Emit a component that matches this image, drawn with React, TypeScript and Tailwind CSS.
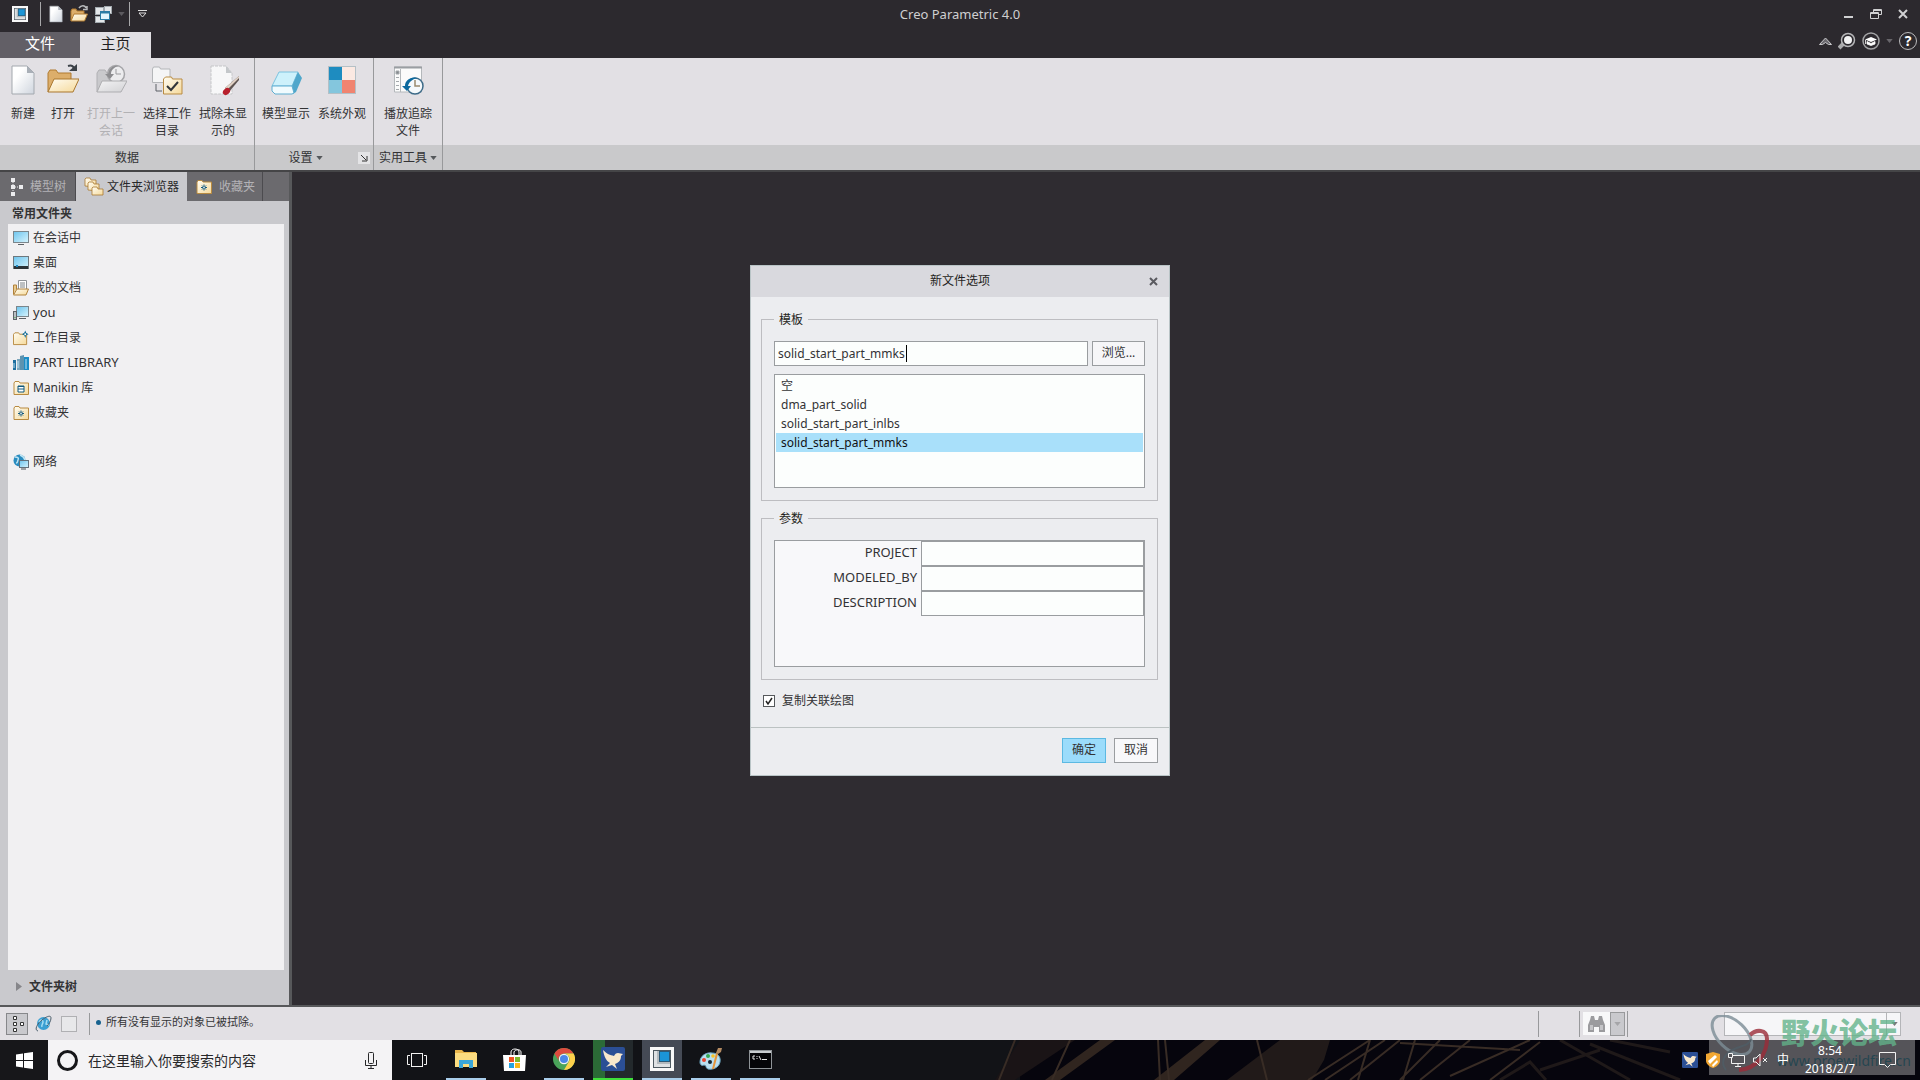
import React, { useState } from 'react';
import type { ReactNode } from 'react';

/* ---------- Shared icon pieces ---------- */

function Gradients() {
  return (
    <svg width="0" height="0" className="absolute" aria-hidden="true">
      <defs>
        <linearGradient id="paper" x1="0" y1="0" x2="1" y2="1">
          <stop offset="0.3" stopColor="#ffffff" />
          <stop offset="1" stopColor="#cfd5de" />
        </linearGradient>
        <linearGradient id="folder" x1="0" y1="0" x2="1" y2="1">
          <stop offset="0" stopColor="#fffdf4" />
          <stop offset="1" stopColor="#f5d99a" />
        </linearGradient>
        <linearGradient id="screen" x1="0" y1="0" x2="1" y2="1">
          <stop offset="0" stopColor="#6cc4ee" />
          <stop offset="1" stopColor="#d8f4fd" />
        </linearGradient>
        <linearGradient id="ghost" x1="0" y1="0" x2="1" y2="1">
          <stop offset="0" stopColor="#f3f3f4" />
          <stop offset="1" stopColor="#d2d2d5" />
        </linearGradient>
      </defs>
    </svg>
  );
}

function CreoIcon({ size = 16 }: { size?: number }) {
  return (
    <svg width={size} height={size} viewBox="0 0 24 24">
      <rect width="24" height="24" fill="#f8f8f8" />
      <rect x="3" y="3" width="18" height="18" fill="#4d5961" />
      <rect x="4" y="4" width="16" height="16" fill="#dfe2e4" />
      <path d="M7 4h2v11h11v2H7z" fill="#b4babe" />
      <rect x="9" y="4" width="11" height="11" fill="#2a5a78" />
      <rect x="10" y="5" width="9" height="9" fill="#1b95d6" />
    </svg>
  );
}

function PageIcon({ size = 16 }: { size?: number }) {
  return (
    <svg width={size} height={size} viewBox="0 0 32 32">
      <path d="M5 2h15l7 7v21H5z" fill="url(#paper)" stroke="#a3a8ae" />
      <path d="M20 2v7h7z" fill="#a9afb7" />
    </svg>
  );
}

function OpenIcon({ size = 16 }: { size?: number }) {
  return (
    <svg width={size} height={size} viewBox="0 0 32 32">
      <path d="M1 28V9l2-3h6l2 3h13v8" fill="#dcae6b" stroke="#b07b30" />
      <path d="M7 15h25l-6 13H1z" fill="url(#folder)" stroke="#a9772e" />
      <path d="M21 2c3-1 5 0 6 2" fill="none" stroke="#3c4248" strokeWidth="2" />
      <path d="M22 7h8V0z" fill="#3c4248" />
    </svg>
  );
}

/* The small quick access variant has a lighter arrow for the dark bar */
function QuickOpenIcon() {
  return (
    <svg width="18" height="18" viewBox="0 0 18 18">
      <path d="M1 16V6l1-2h4l1 2h7v4" fill="#dcae6b" stroke="#b07b30" />
      <path d="M4 9h13.500l-3 7H1z" fill="url(#folder)" stroke="#b07b30" />
      <path d="M9 3c2-3 6-3 7 0M13 4.500h4V1" fill="none" stroke="#b9bbbd" strokeWidth="1.500" />
    </svg>
  );
}

function WindowsIcon() {
  return (
    <svg width="18" height="17" viewBox="0 0 18 17">
      <rect x="1.500" y="1.500" width="8" height="7" fill="#e4e7e9" stroke="#a2a9ae" />
      <rect x="10.500" y="0.500" width="7" height="7" fill="#e4e7e9" stroke="#a2a9ae" />
      <rect x="1.500" y="10.500" width="9" height="6" fill="#e4e7e9" stroke="#a2a9ae" />
      <rect x="6.500" y="5.500" width="9" height="8" fill="#e3f6fc" stroke="#2a7da4" />
      <path d="M6 6.500h10" stroke="#2a7da4" strokeWidth="2" />
    </svg>
  );
}

function SessionIcon() {
  return (
    <svg width="32" height="32" viewBox="0 0 32 32">
      <path d="M2 28V9l2-3h6l2 3h12v8" fill="#c9c9cc" stroke="#b0b0b3" />
      <circle cx="21" cy="10" r="8.500" fill="#ececee" stroke="#a5a5a8" strokeWidth="1.500" />
      <path d="M21 5v5h5" fill="none" stroke="#9b9b9e" />
      <path d="M24 2c-6-1-10 2-11 8h-3l5 5 4-5h-3c0-4 3-7 8-8z" fill="#8d8d90" />
      <path d="M7 17h25l-6 11H2z" fill="url(#ghost)" stroke="#adadb0" />
    </svg>
  );
}

function WorkDirIcon() {
  return (
    <svg width="32" height="32" viewBox="0 0 32 32">
      <path d="M1.500 18.500V5l1-2h6l1 2h9.500v13.500z" fill="#f5f5f6" stroke="#b4b6b9" />
      <path d="M5 20v7h6" fill="none" stroke="#5d6166" />
      <path d="M12.500 30V15l2-2h6l1 2h9.500v15z" fill="url(#folder)" stroke="#b98b42" />
      <path d="M16 22l4 4 7-8" fill="none" stroke="#32363a" strokeWidth="2" />
    </svg>
  );
}

function EraseIcon() {
  return (
    <svg width="32" height="32" viewBox="0 0 32 32">
      <path d="M4 2h15l6 7v21H4z" fill="#f7f7f8" stroke="#c5c6c8" strokeDasharray="3 1" />
      <path d="M19 2v7h6z" fill="#c4c7ca" />
      <path d="M32 12v4L22 28l-4-4z" fill="#5f5552" />
      <path d="M32 12L18 24l2 2 12-12z" fill="#e2d3c6" />
      <ellipse cx="19.500" cy="27.500" rx="4" ry="3" fill="#b8202c" transform="rotate(-40 19.500 27.500)" />
    </svg>
  );
}

function ModelIcon() {
  return (
    <svg width="32" height="32" viewBox="0 0 32 32">
      <path d="M9 8h19l-6 14H2z" fill="#cdf1fb" stroke="#7cc3df" />
      <path d="M28 8l4 6-6 14-3 2-1-8z" fill="#4fa7cb" />
      <path d="M2 22h20l2 7-2 1H5l-3-3z" fill="#f0fbfe" stroke="#5eadd0" />
    </svg>
  );
}

function AppearanceIcon() {
  return (
    <svg width="32" height="32" viewBox="0 0 32 32">
      <rect x="2" y="2" width="28" height="28" fill="#b4c0c6" />
      <rect x="3" y="3" width="13" height="13" fill="#1e8cc0" />
      <rect x="16" y="3" width="13" height="13" fill="#fbe9e2" />
      <rect x="3" y="16" width="13" height="13" fill="#84c6dd" />
      <rect x="16" y="16" width="13" height="13" fill="#f08470" />
    </svg>
  );
}

function TraceIcon() {
  return (
    <svg width="32" height="32" viewBox="0 0 32 32">
      <path d="M2.500 3h27v25h-27z" fill="#fbfbfb" stroke="#b4b8bb" />
      <path d="M2 3.500h28" stroke="#9a9ea2" strokeWidth="2" />
      <path d="M8.500 5v23" stroke="#b4b8bb" />
      <path d="M4 7h3v3H4zM4 13.500h3M4 17.500h3M4 21.500h3M4 25.500h3" fill="#84888c" stroke="#a4a8ac" />
      <circle cx="23" cy="22" r="8" fill="#f5f9fb" stroke="#3d6b88" strokeWidth="1.500" />
      <path d="M23 16v6h5" fill="none" stroke="#9a8b6e" strokeWidth="1.500" />
      <path d="M26 14c-7-2-13 2-13 8h-3l5 5 4-5h-3c1-4 4-7 10-8z" fill="#0d6a9f" />
    </svg>
  );
}

/* ---------- Small icons ---------- */

function Caret({ className = 'text-[#55585b]' }: { className?: string }) {
  return (
    <svg width="7" height="4" viewBox="0 0 8 5" className={className}>
      <path d="M0 0h8L4 5z" fill="currentColor" />
    </svg>
  );
}

function TreeIcon() {
  return (
    <svg width="14" height="20" viewBox="0 0 14 20" fill="#ececee">
      <path d="M1 1h4v4H1zM1 8h4v4H1zM1 15h4v4H1zM9 8h4v4H9z" />
      <path d="M3 5v10M5 10h4" stroke="#ececee" strokeDasharray="1 1" />
    </svg>
  );
}

function FoldersIcon() {
  return (
    <svg width="20" height="20" viewBox="0 0 20 20" stroke="#a97a30" strokeWidth="0.800">
      <path d="M1 9V2l1-1h4l1 2h5v7z" fill="url(#folder)" />
      <path d="M4 13V6l1-1h4l1 2h5v7z" fill="url(#folder)" />
      <path d="M8 18v-7l1-1h4l1 2h5v6z" fill="url(#folder)" />
    </svg>
  );
}

function FavoriteIcon() {
  return (
    <svg width="16" height="16" viewBox="0 0 16 16">
      <path d="M1 14.500V3l1-1.500h4L7 3h8.500v11.500z" fill="url(#folder)" stroke="#b88a40" />
      <path d="M8 5.500v6M5 8.500h6M6 6.500l4 4M10 6.500l-4 4" stroke="#11597f" />
      <circle cx="8" cy="8.500" r="0.800" fill="#fff" />
    </svg>
  );
}

function MonitorIcon() {
  return (
    <svg width="16" height="16" viewBox="0 0 16 16">
      <rect x="0.500" y="1.500" width="15" height="11" fill="url(#screen)" stroke="#7b868c" />
      <path d="M5 14h6v1H5z" fill="#5b6266" />
    </svg>
  );
}

function DesktopIcon() {
  return (
    <svg width="16" height="16" viewBox="0 0 16 16">
      <rect x="0.500" y="1.500" width="15" height="12" fill="url(#screen)" stroke="#6e787e" />
      <path d="M1 11h14v3H1z" fill="#2b3338" />
      <path d="M3 10h2v2H3z" fill="#1c86c0" />
    </svg>
  );
}

function DocumentsIcon() {
  return (
    <svg width="16" height="16" viewBox="0 0 16 16">
      <path d="M0.500 14V5h3v4" fill="#e8c98e" stroke="#b1823a" />
      <path d="M5.500 0.500h8v10h-8z" fill="#fff" stroke="#8e9296" />
      <path d="M7 3h5M7 5h5M7 7h5" stroke="#7d8286" />
      <path d="M4 9h11.500L13 15H0.500z" fill="url(#folder)" stroke="#b1823a" />
    </svg>
  );
}

function ComputerIcon() {
  return (
    <svg width="16" height="16" viewBox="0 0 16 16">
      <rect x="3.500" y="1.500" width="12" height="10" fill="url(#screen)" stroke="#7b868c" />
      <path d="M6 13h7v1H6z" fill="#5b6266" />
      <rect x="0.500" y="6.500" width="3" height="8" fill="#b9bfc3" stroke="#5e6468" />
      <path d="M2 12v1" stroke="#37a23c" />
    </svg>
  );
}

function WorkFolderIcon() {
  return (
    <svg width="17" height="16" viewBox="0 0 17 16">
      <path d="M0.500 15V4L2 2.500h4L7 4h7.500v11z" fill="url(#folder)" stroke="#b88a40" />
      <path d="M13 0l1 2.500L16.500 4 14 5l-1 3-1-3-2.500-1L12 2.500z" fill="#0f6b98" />
      <circle cx="13" cy="4" r="1" fill="#fff" />
    </svg>
  );
}

function LibraryIcon() {
  return (
    <svg width="16" height="16" viewBox="0 0 16 16">
      <path d="M0 5h3v10H0z" fill="#1e6f9f" />
      <path d="M4 4h3v11H4z" fill="#7ba5bb" />
      <path d="M7 1l4-1v15H7z" fill="#5d93b0" />
      <path d="M11 2h5v13h-5z" fill="#1b8cc6" />
      <path d="M1 8v5M5 6v7M13 4v10" stroke="#bfe3f3" />
    </svg>
  );
}

function ManikinIcon() {
  return (
    <svg width="16" height="16" viewBox="0 0 16 16">
      <path d="M1 14.500V3l1-1.500h4L7 3h8.500v11.500z" fill="url(#folder)" stroke="#b88a40" />
      <path d="M5 6h6v6H5z" fill="#fff" stroke="#11597f" />
      <path d="M5 9h6M5 6.500h6" stroke="#11597f" />
    </svg>
  );
}

function NetworkIcon() {
  return (
    <svg width="16" height="16" viewBox="0 0 16 16">
      <circle cx="6.500" cy="6.500" r="6" fill="#2a8cc0" />
      <path d="M2 3c3 0 4 1 3 3s0 3-2 3M7 1c3 1 4 2 5 5" stroke="#bfe4f3" strokeWidth="1.500" fill="none" />
      <rect x="6.500" y="6.500" width="9" height="7" fill="url(#screen)" stroke="#63707a" />
      <path d="M8 15h5" stroke="#4b5256" />
    </svg>
  );
}

/* ---------- Taskbar icons ---------- */

function BirdIcon({ size }: { size: number }) {
  return (
    <svg width={size} height={size} viewBox="0 0 24 24">
      <rect width="24" height="24" rx="2" fill="#2b4f95" />
      <path d="M2 3c4 4 7 5 11 6 1-2 2-3 4-3l5 1-2 2c0 5-3 7-6 8l2 5-5-4-6 2 4-4c-4-2-6-7-7-13z" fill="#f8e8cc" />
    </svg>
  );
}

function ExplorerIcon() {
  return (
    <svg width="22" height="20" viewBox="0 0 22 20">
      <path d="M0 1h7l2 2h12v4H0z" fill="#e9b64c" />
      <path d="M0 4h22v14H0z" fill="#fbdc80" />
      <path d="M4 19v-8h14v8h-4v-4H8v4z" fill="#3aa6d8" />
    </svg>
  );
}

function StoreIcon() {
  return (
    <svg width="24" height="24" viewBox="0 0 24 24">
      <path d="M8 8V4c0-4 8-4 8 0v4M11 7V4c1-3 7-3 7 0v3" fill="none" stroke="#fff" />
      <path d="M0 7h23l-1 16H1z" fill="#fff" />
      <path d="M6 9h5v5H6z" fill="#f05323" />
      <path d="M12 9h5v5h-5z" fill="#7fba2c" />
      <path d="M6 15h5v5H6z" fill="#26a3e0" />
      <path d="M12 15h5v5h-5z" fill="#fbb918" />
    </svg>
  );
}

function ChromeIcon() {
  return (
    <svg width="22" height="22" viewBox="0 0 24 24">
      <circle cx="12" cy="12" r="12" fill="#4aa35a" />
      <path d="M1.600 6A12 12 0 0 1 22.400 6H12a6 6 0 0 0-5.200 9z" fill="#dd4b3e" />
      <path d="M22.400 6A12 12 0 0 1 12 24l5.200-9A6 6 0 0 0 12 6z" fill="#fdd04b" />
      <circle cx="12" cy="12" r="5.600" fill="#f4f4f4" />
      <circle cx="12" cy="12" r="4.400" fill="#4a86e8" />
    </svg>
  );
}

function PaintIcon() {
  return (
    <svg width="24" height="24" viewBox="0 0 24 24">
      <path d="M1 15c0-6 6-10 12-9 6 0 9 4 8 9-1 6-8 8-12 7-3-1-1-4-4-4-2 1-4 0-4-3z" fill="#b9dff0" stroke="#6ba6c2" />
      <circle cx="9" cy="9" r="2" fill="#35a853" />
      <circle cx="5" cy="13" r="2" fill="#e8452f" />
      <circle cx="14" cy="9" r="1.800" fill="#f7c325" />
      <circle cx="11" cy="15" r="2" fill="#132530" />
      <path d="M13 22l4-16 2 1-4 15z" fill="#e5963c" />
      <path d="M17 6l2-5 4 0-1 4-3 2z" fill="#b58b62" />
    </svg>
  );
}

function ConsoleIcon() {
  return (
    <svg width="23" height="19" viewBox="0 0 23 19">
      <rect x="0.500" y="0.500" width="22" height="18" fill="#050508" stroke="#8f9498" />
      <path d="M1 1h21v2H1z" fill="#c9cdd0" />
      <path d="M6 6H4v3h2M8 6v1M8 8v1M10 6l2 4M13 9.500h5" stroke="#e6e6e6" fill="none" />
    </svg>
  );
}

function TaskViewIcon() {
  return (
    <svg width="20" height="14" viewBox="0 0 20 14" fill="none" stroke="#f2f2f2">
      <rect x="4.500" y="0.500" width="11" height="13" />
      <path d="M3 2.500H0.500v9H3M17 2.500h2.500v9H17" />
    </svg>
  );
}

/* Steel beams of the wallpaper behind the taskbar */
function TaskbarBackdrop() {
  return (
    <svg className="absolute inset-0 h-full w-full" viewBox="0 0 1920 40" preserveAspectRatio="none" aria-hidden="true">
      <rect width="1920" height="40" fill="#06050d" />
      <rect x="390" width="630" height="40" fill="#121317" />
      <path d="M1020 0h55l-60 40h-20z" fill="#1a1416" />
      <path d="M1100 0h15l-55 40h-15zM1205 0h15l-46 40h-20z" fill="#30251f" />
      <path d="M1280 0h50l-6 20-12 20h-85z" fill="#211a19" />
      <path
        d="M1015 0l-16 40M1070 0l-18 40M1158 0l2 40M1165 0l4 40M1257 0l10 40M1308 40l62-40M1325 40l60-40M1370 0l-12 40M1400 0l-50 40M1415 0l-12 40M1440 0l-40 40M1470 0l-50 40M1400 3l120 7M1450 36l80-36M1490 40l50-38"
        stroke="#382c25"
        strokeWidth="2"
      />
      <path
        d="M1560 0l70 40M1590 4l90 36M1610 0l60 12M1540 30l60-20M1500 40l30-18 16 18"
        stroke="#1f1919"
        strokeWidth="3"
        fill="none"
      />
    </svg>
  );
}

/* ---------- Window parts ---------- */

function TitleBar() {
  return (
    <div className="relative flex h-8 items-center justify-between bg-[#2c292e] pr-3">
      <div className="flex h-full items-center pb-1">
        <button className="ml-3" aria-label="Creo">
          <CreoIcon />
        </button>
        <span className="ml-3 h-6 w-px bg-[#a8a8aa]" />
        <button className="ml-[6px]" aria-label="新建">
          <PageIcon size={18} />
        </button>
        <button className="ml-[5px]" aria-label="打开">
          <QuickOpenIcon />
        </button>
        <button className="ml-[6px] flex items-center gap-[6px]" aria-label="窗口">
          <WindowsIcon />
          <Caret className="text-[#5c5a5f]" />
        </button>
        <span className="ml-1 h-6 w-px bg-[#a8a8aa]" />
        <button className="ml-2" aria-label="自定义快速访问工具栏">
          <svg width="9" height="8" viewBox="0 0 9 8" fill="none" stroke="#dcdcdc">
            <path d="M0 0.500h9M1 3h7L4.500 7z" />
          </svg>
        </button>
      </div>
      <h1 className="pointer-events-none absolute inset-x-0 top-1 text-center text-[13px] leading-5 text-[#cfcfd1]">
        Creo Parametric 4.0
      </h1>
      <div className="flex items-center gap-4 pb-[5px] text-[#d0d0d2]">
        <button aria-label="最小化">
          <svg width="10" height="10" viewBox="0 0 10 10">
            <path d="M0 7h9v2H0z" fill="currentColor" />
          </svg>
        </button>
        <button aria-label="还原">
          <svg width="12" height="10" viewBox="0 0 12 10" fill="none" stroke="currentColor">
            <path d="M3.500 3V0.500h8v5H8.500M0.500 3.500h8v6h-8zM3 1.500h8M0 4.500h8" />
          </svg>
        </button>
        <button aria-label="关闭">
          <svg width="10" height="10" viewBox="0 0 10 10">
            <path d="M1 1l8 8M9 1l-8 8" stroke="currentColor" strokeWidth="2" />
          </svg>
        </button>
      </div>
    </div>
  );
}

function RibbonTabs() {
  return (
    <div className="flex h-[26px] items-stretch justify-between bg-[#2c292e] pr-[3px]">
      <div className="flex text-[15px] leading-[22px]">
        <button className="w-20 bg-[#625f66] pb-1 text-white">文件</button>
        <button className="w-[71px] bg-[#e2e0e4] pb-1 text-[#1f1f21]">主页</button>
      </div>
      <div className="flex items-center gap-[6px] pb-2">
        <button aria-label="最小化功能区">
          <svg width="13" height="9" viewBox="0 0 13 9">
            <path d="M0.500 7.500L6.500 1l6 6.500h-3l-3-2-3 2z" fill="#6c6a70" stroke="#c8c8ca" />
          </svg>
        </button>
        <button aria-label="搜索">
          <svg width="18" height="18" viewBox="0 0 18 18">
            <path d="M6 11l-5 5" stroke="#a9a9ab" strokeWidth="4" />
            <circle cx="10" cy="8" r="6.500" fill="#2c292e" stroke="#b5b5b7" strokeWidth="1.500" />
            <circle cx="10" cy="8" r="4" fill="#f2f2f3" />
          </svg>
        </button>
        <button aria-label="学习中心" className="flex items-center gap-[6px]">
          <svg width="18" height="18" viewBox="0 0 18 18">
            <circle cx="9" cy="9" r="8" fill="#2c292e" stroke="#a3a3a5" strokeWidth="1.500" />
            <path d="M3 7.500L9 5l6 2.500L9 10z" fill="#fff" />
            <path d="M5 9.500l4 2 4-2V12l-4 1.500L5 12zM3.500 8v4" fill="#fff" stroke="#fff" strokeWidth="0.800" />
          </svg>
          <Caret className="text-[#68666b]" />
        </button>
        <button
          aria-label="帮助"
          className="flex h-[18px] w-[18px] items-center justify-center rounded-full border border-[#bcbcbe] text-[14px] leading-4 font-bold text-white"
        >
          ?
        </button>
      </div>
    </div>
  );
}

interface RibbonItem {
  lines: string[];
  icon: ReactNode;
  width: string;
  disabled?: boolean;
}

const dataItems: RibbonItem[] = [
  { lines: ['新建'], icon: <PageIcon size={32} />, width: 'w-10' },
  { lines: ['打开'], icon: <OpenIcon size={32} />, width: 'w-10' },
  { lines: ['打开上一', '会话'], icon: <SessionIcon />, width: 'w-14', disabled: true },
  { lines: ['选择工作', '目录'], icon: <WorkDirIcon />, width: 'w-14' },
  { lines: ['拭除未显', '示的'], icon: <EraseIcon />, width: 'w-14' },
];

const settingItems: RibbonItem[] = [
  { lines: ['模型显示'], icon: <ModelIcon />, width: 'w-14' },
  { lines: ['系统外观'], icon: <AppearanceIcon />, width: 'w-14' },
];

const toolItems: RibbonItem[] = [{ lines: ['播放追踪', '文件'], icon: <TraceIcon />, width: 'w-[62px]' }];

function RibbonGroup({ items, footer }: { items: RibbonItem[]; footer: ReactNode }) {
  return (
    <section className="flex flex-col border-r border-[#98999b]">
      <div className="flex h-[87px] px-[3px] pt-[6px]">
        {items.map((item) => (
          <button
            key={item.lines[0]}
            disabled={item.disabled}
            className={`flex flex-col items-center ${item.width} ${item.disabled ? 'text-[#b2b1b4]' : 'text-[#333335]'}`}
          >
            {item.icon}
            <span className="mt-[9px] text-[12px] leading-[17px]">
              {item.lines.map((line) => (
                <span key={line} className="block whitespace-nowrap">
                  {line}
                </span>
              ))}
            </span>
          </button>
        ))}
      </div>
      <div className="flex h-[25px] items-center justify-center bg-[#c9c9cb] text-[12px] text-[#333335]">{footer}</div>
    </section>
  );
}

function Ribbon() {
  return (
    <div className="flex border-b-2 border-[#454547] bg-[#e2e0e4]">
      <RibbonGroup items={dataItems} footer="数据" />
      <RibbonGroup
        items={settingItems}
        footer={
          <>
            <span className="flex-1" />
            <button className="mr-[14px] flex items-center gap-[3px]">
              设置
              <Caret />
            </button>
            <span className="flex flex-1 justify-end pr-[3px]">
              <button aria-label="设置选项" className="bg-[#e4e4e6] p-[2px]">
                <svg width="8" height="8" viewBox="0 0 8 8" stroke="#333" fill="none">
                  <path d="M1 1l5 5M7 2v5H2" />
                </svg>
              </button>
            </span>
          </>
        }
      />
      <RibbonGroup
        items={toolItems}
        footer={
          <button className="flex items-center gap-[3px]">
            实用工具
            <Caret />
          </button>
        }
      />
      <div className="flex flex-1 flex-col">
        <div className="h-[87px]" />
        <div className="h-[25px] bg-[#c9c9cb]" />
      </div>
    </div>
  );
}

const folders = [
  { label: '在会话中', icon: <MonitorIcon /> },
  { label: '桌面', icon: <DesktopIcon /> },
  { label: '我的文档', icon: <DocumentsIcon /> },
  { label: 'you', icon: <ComputerIcon />, latin: true },
  { label: '工作目录', icon: <WorkFolderIcon /> },
  { label: 'PART LIBRARY', icon: <LibraryIcon />, latin: true },
  { label: 'Manikin 库', icon: <ManikinIcon /> },
  { label: '收藏夹', icon: <FavoriteIcon /> },
];

function FolderRow({ label, icon, latin }: { label: string; icon: ReactNode; latin?: boolean }) {
  return (
    <li>
      <button className={`flex h-[25px] w-full items-center gap-1 pl-[5px] text-left ${latin ? 'text-[13px]' : ''}`}>
        <span className="flex w-4 justify-center">{icon}</span>
        {label}
      </button>
    </li>
  );
}

function Navigator() {
  return (
    <aside className="flex w-[292px] shrink-0 flex-col border-r-[3px] border-[#57585a] bg-[#c9c9cd] text-[12px] text-[#333335]">
      <div className="flex h-[29px] bg-[#6b6a6e] text-[#b3b2b6]">
        <button className="flex w-[76px] items-center gap-[6px] border-r border-[#4c4b4f] pl-[10px]">
          <TreeIcon />
          模型树
        </button>
        <button className="flex w-[111px] items-center gap-[3px] bg-[#c9c9cd] pl-2 text-[#28282a]">
          <FoldersIcon />
          文件夹浏览器
        </button>
        <button className="flex w-[76px] items-center gap-[7px] border-r border-[#4c4b4f] pl-[9px]">
          <FavoriteIcon />
          收藏夹
        </button>
      </div>
      <h2 className="h-[23px] pl-3 text-[12px] leading-[25px] font-bold">常用文件夹</h2>
      <div className="mr-[5px] ml-2 flex-1 bg-[#f1f0f2]">
        <ul className="pt-px">
          {folders.map((folder) => (
            <FolderRow key={folder.label} {...folder} />
          ))}
        </ul>
        <ul className="pt-6">
          <FolderRow label="网络" icon={<NetworkIcon />} />
        </ul>
      </div>
      <button className="flex h-[35px] items-center gap-[7px] pb-[2px] pl-4 font-bold">
        <svg width="6" height="9" viewBox="0 0 6 9">
          <path d="M0 0l6 4.500L0 9z" fill="#86868a" />
        </svg>
        文件夹树
      </button>
    </aside>
  );
}

/* ---------- New file options dialog ---------- */

const templates = ['空', 'dma_part_solid', 'solid_start_part_inlbs', 'solid_start_part_mmks'];
const parameters = ['PROJECT', 'MODELED_BY', 'DESCRIPTION'];

function NewFileDialog() {
  const [template, setTemplate] = useState('solid_start_part_mmks');
  const [copyDrawing, setCopyDrawing] = useState(true);

  return (
    <div
      role="dialog"
      aria-labelledby="dialog-title"
      className="w-[420px] border border-[#b9c4c6] bg-[#ecedf0] text-[12px] text-[#333335]"
    >
      <div className="relative flex h-[31px] items-center justify-center bg-[#d9d9de]">
        <h2 id="dialog-title" className="text-[12px] text-[#1f1f21]">
          新文件选项
        </h2>
        <button aria-label="关闭" className="absolute right-[11px]">
          <svg width="9" height="9" viewBox="0 0 9 9">
            <path d="M1 1l7 7M8 1L1 8" stroke="#5b5b60" strokeWidth="2" />
          </svg>
        </button>
      </div>
      <div className="pt-[14px] pr-[11px] pl-[10px]">
        <fieldset className="border border-[#bdbdc1] px-3 pt-3 pb-3">
          <legend className="px-[5px] leading-[18px] text-[#1f1f21]">模板</legend>
          <div className="flex gap-1">
            <div className="relative flex-1">
              <input
                type="text"
                aria-label="模板"
                value={template}
                onChange={(e) => setTemplate(e.target.value)}
                className="block h-[25px] w-full border border-[#9a9da0] bg-[#fcfefd] px-[3px] text-[12px] outline-none"
              />
              {/* text cursor */}
              <span className="absolute top-1 left-[132px] h-[17px] w-px bg-black" />
            </div>
            <button className="h-[25px] w-[53px] border border-[#9a9da0] bg-[#f6f6f8]">浏览...</button>
          </div>
          <ul
            role="listbox"
            aria-label="模板列表"
            className="mt-2 h-[114px] border border-[#9a9da0] bg-[#fcfefd] p-px leading-[19px]"
          >
            {templates.map((name) => (
              <li
                key={name}
                role="option"
                aria-selected={template === name}
                onClick={() => setTemplate(name)}
                className={`px-[5px] ${template === name ? 'bg-[#a9e0fa] text-[#101012]' : ''}`}
              >
                {name}
              </li>
            ))}
          </ul>
        </fieldset>

        <fieldset className="mt-[9px] border border-[#bdbdc1] px-3 pt-3 pb-3">
          <legend className="px-[5px] leading-[18px] text-[#1f1f21]">参数</legend>
          <div className="h-[127px] border border-[#9a9da0] bg-[#f8f8fa]">
            {parameters.map((name) => (
              <div key={name} className="flex h-[25px] items-center">
                <label htmlFor={name} className="flex-1 pr-1 text-right text-[13px]">
                  {name}
                </label>
                <input id={name} type="text" className="h-full w-[223px] border border-[#9a9da0] bg-[#fcfefd] px-1" />
              </div>
            ))}
          </div>
        </fieldset>

        <label className="mt-3 flex h-[18px] items-center gap-[7px] pl-[2px]">
          <span className="relative flex h-3 w-3">
            <input
              type="checkbox"
              checked={copyDrawing}
              onChange={(e) => setCopyDrawing(e.target.checked)}
              className="h-3 w-3 appearance-none border border-[#55585b] bg-white"
            />
            {copyDrawing && (
              <svg className="pointer-events-none absolute inset-0" width="12" height="12" viewBox="0 0 12 12">
                <path d="M3 6l2 3 4-6" fill="none" stroke="#222" strokeWidth="1.500" />
              </svg>
            )}
          </span>
          复制关联绘图
        </label>
      </div>
      <div className="mt-[17px] flex justify-end gap-2 border-t border-[#bcc2c2] pt-[10px] pr-[11px] pb-3">
        <button className="h-[25px] w-11 border border-[#5cb9e2] bg-[#9bdcfb]">确定</button>
        <button className="h-[25px] w-11 border border-[#9a9da0] bg-[#f8f8fa]">取消</button>
      </div>
    </div>
  );
}

function StatusBar() {
  return (
    <footer className="flex h-[35px] items-center border-t-2 border-[#57585a] bg-[#e2e0e4] pr-[19px] text-[11px] text-[#333335]">
      <button aria-label="模型树" className="ml-[6px] flex h-[22px] w-[22px] items-center justify-center border border-[#87888b] bg-[#c9c9cd]">
        <svg width="14" height="18" viewBox="0 0 14 18" fill="#fff" stroke="#333">
          <path d="M3.500 1.500h3v3h-3zM3.500 7.500h3v3h-3zM3.500 13.500h3v3h-3zM10.500 7.500h3v3h-3z" />
        </svg>
      </button>
      <button aria-label="浏览器" className="ml-[7px]">
        <svg width="17" height="17" viewBox="0 0 17 17">
          <circle cx="8.500" cy="8.500" r="6.500" fill="#3a9fd2" />
          <path d="M4 7c2-3 4-2 4 0s-2 3-1 5M12 5l-1 4 3 1" stroke="#a5dcf3" fill="none" strokeWidth="1.500" />
          <path d="M3 16c-4-1-1-7 4-11s9-5 9-2-2 6-4 8" stroke="#4c5f6d" fill="none" />
        </svg>
      </button>
      <button aria-label="全屏" className="ml-[9px] h-4 w-4 border border-[#b0b0b3] bg-[#e8e8ea]" />
      <span className="mr-[6px] ml-3 h-[22px] w-px bg-[#98999b]" />
      <p className="flex items-center gap-[5px] pb-[2px]">
        <span className="h-[5px] w-[5px] rounded-full bg-[#17628f]" />
        所有没有显示的对象已被拭除。
      </p>
      <span className="mr-10 ml-auto h-[26px] w-px bg-[#98999b]" />
      <span className="mr-[3px] h-[26px] w-px bg-[#98999b]" />
      <button aria-label="查找" className="flex h-[23px] w-[27px] items-center justify-center bg-[#f8f8f9]">
        <svg width="17" height="16" viewBox="0 0 17 16" fill="#9b9b9e">
          <path d="M3 0h3l1 4h3l1-4h3l1 4 2 5v7h-6v-5H6v5H0V9l2-5z" />
          <path d="M2 9h3v5H2zM12 9h3v5h-3z" fill="#c4c4c7" />
        </svg>
      </button>
      <button aria-label="查找选项" className="flex h-6 w-[15px] items-center justify-center border border-[#98999b] bg-[#c9c9cd]">
        <Caret className="text-[#a5a5a8]" />
      </button>
      <span className="mr-24 ml-[2px] h-[26px] w-px bg-[#98999b]" />
      <div className="relative">
        <select aria-label="选择过滤器" className="block h-6 w-[177px] appearance-none border border-[#b4b5b8] bg-[#f6f6f8]">
          <option value="" />
        </select>
        <span className="pointer-events-none absolute inset-y-0 right-0 flex w-[15px] items-center justify-center border-l border-[#b4b5b8]">
          <Caret className="text-[#77787b]" />
        </span>
      </div>
    </footer>
  );
}

const tasks = [
  { name: '任务视图', icon: <TaskViewIcon />, style: '' },
  { name: '文件资源管理器', icon: <ExplorerIcon />, style: 'border-b-2 border-[#a9cdea]' },
  { name: '应用商店', icon: <StoreIcon />, style: '' },
  { name: 'Chrome', icon: <ChromeIcon />, style: 'border-b-2 border-[#a9cdea]' },
  { name: '飞鸟', icon: <BirdIcon size={24} />, style: 'border-b-2 border-[#3fe03a] bg-linear-to-r from-[#2b6a36] from-30% to-[#23292c] to-30%' },
  { name: 'Creo', icon: <CreoIcon size={24} />, style: 'border-b-2 border-[#a9cdea] bg-[#454a55]' },
  { name: '画图', icon: <PaintIcon />, style: 'border-b-2 border-[#a9cdea]' },
  { name: '命令提示符', icon: <ConsoleIcon />, style: 'border-b-2 border-[#a9cdea]' },
];

function Taskbar() {
  return (
    <div className="relative flex h-10 shrink-0 items-stretch text-white">
      <TaskbarBackdrop />
      <div className="relative flex flex-1 items-stretch">
        <button aria-label="开始" className="flex w-12 items-center justify-center bg-[#17171a]">
          <svg width="17" height="17" viewBox="0 0 17 17" fill="#fff">
            <path d="M0 2.500L7 1.500V8H0zM8 1.300L17 0v8H8zM0 9h7v6.500L0 14.500zM8 9h9v8l-9-1.300z" />
          </svg>
        </button>
        <label className="flex w-[344px] items-center bg-[#f4f3f5] pr-[15px] pl-[9px]">
          <span className="h-[21px] w-[21px] rounded-full border-[3px] border-[#161619]" />
          <input
            type="text"
            placeholder="在这里输入你要搜索的内容"
            aria-label="搜索"
            className="ml-[10px] min-w-0 flex-1 bg-transparent text-[14px] outline-none placeholder:text-[#28282a]"
          />
          <svg width="12" height="17" viewBox="0 0 12 17" fill="none" stroke="#28282a">
            <rect x="3.500" y="0.500" width="5" height="11" rx="1" />
            <path d="M0.500 8v5.500h11V8M6 13.500v3M3 16.500h6" />
          </svg>
        </label>
        <div className="flex gap-[9px] pl-[5px]">
          {tasks.map((task) => (
            <button key={task.name} aria-label={task.name} className={`flex w-10 items-center justify-center ${task.style}`}>
              {task.icon}
            </button>
          ))}
        </div>
      </div>
      <div className="relative z-20 flex items-center gap-2 pr-6">
        <BirdIcon size={16} />
        <svg width="14" height="16" viewBox="0 0 14 16">
          <path d="M7 0l7 2v7c0 3-4 6-7 7-3-1-7-4-7-7V2z" fill="#f2a733" />
          <path d="M2 9l7-6 2 2-7 7zM6 13l5-5 1 2-5 5z" fill="#fff" />
        </svg>
        <svg width="17" height="14" viewBox="0 0 17 14" fill="none" stroke="#f2f2f2">
          <path d="M5 2.500h11.500v8H3.500V5M0.500 0.500h4v4h-4zM7 13.500h6M10 11v2" />
        </svg>
        <svg width="15" height="14" viewBox="0 0 15 14" fill="none" stroke="#f2f2f2">
          <path d="M0.500 5H3l4-4v12L3 9H0.500zM10 5l4 4M14 5l-4 4" />
        </svg>
        <span className="pl-px text-[12px]">中</span>
        <div className="w-[66px] text-center text-[12px] leading-[18px]">
          <div>8:54</div>
          <div>2018/2/7</div>
        </div>
        <button aria-label="通知" className="ml-2">
          <svg width="17" height="17" viewBox="0 0 17 17" fill="none" stroke="#f2f2f2">
            <path d="M0.500 0.500h16v12h-5l-3 3-3-3h-5z" />
          </svg>
        </button>
      </div>
    </div>
  );
}

/* Forum mark laid over the lower right corner */
function Watermark() {
  return (
    <div className="pointer-events-none absolute right-[5px] bottom-[5px] z-10 h-[60px] w-[206px]">
      <div className="absolute inset-x-0 bottom-0 h-[35px] bg-[#8a888c]/60" />
      <svg className="absolute inset-0" width="206" height="60" viewBox="0 0 206 60" fill="none" opacity="0.800">
        <ellipse cx="23" cy="20" rx="24" ry="14" stroke="#7c8d96" strokeWidth="3" transform="rotate(44 23 20)" />
        <path d="M41 20c6-6 17-6 17 4 0 14-10 30-28 31" stroke="#9c2b38" strokeWidth="4" />
        <path d="M42 24c-2 8-12 6-22 13-6 5-8 12-3 18" stroke="#4f5d66" strokeWidth="2" />
      </svg>
      <div className="absolute top-[2px] right-[18px] text-[29px] leading-8 font-black whitespace-nowrap text-[#62b38a]/80">野火论坛</div>
      <div className="absolute right-1 bottom-1 text-[14px] leading-5 whitespace-nowrap text-[#1f4450]/90">www.proewildfire.cn</div>
    </div>
  );
}

export default function App() {
  return (
    <div className="relative flex h-screen flex-col overflow-hidden bg-[#2f2c31] font-['Noto_Sans','Noto_Sans_CJK_SC',sans-serif]">
      <Gradients />
      <div className="relative flex min-h-0 flex-1 flex-col">
        <TitleBar />
        <RibbonTabs />
        <Ribbon />
        <div className="flex min-h-0 flex-1">
          <Navigator />
          <main className="flex-1 bg-[#2f2c31]" />
        </div>
        <StatusBar />
        <div className="pointer-events-none absolute inset-0 flex items-center justify-center">
          <div className="pointer-events-auto">
            <NewFileDialog />
          </div>
        </div>
      </div>
      <Taskbar />
      <Watermark />
    </div>
  );
}
